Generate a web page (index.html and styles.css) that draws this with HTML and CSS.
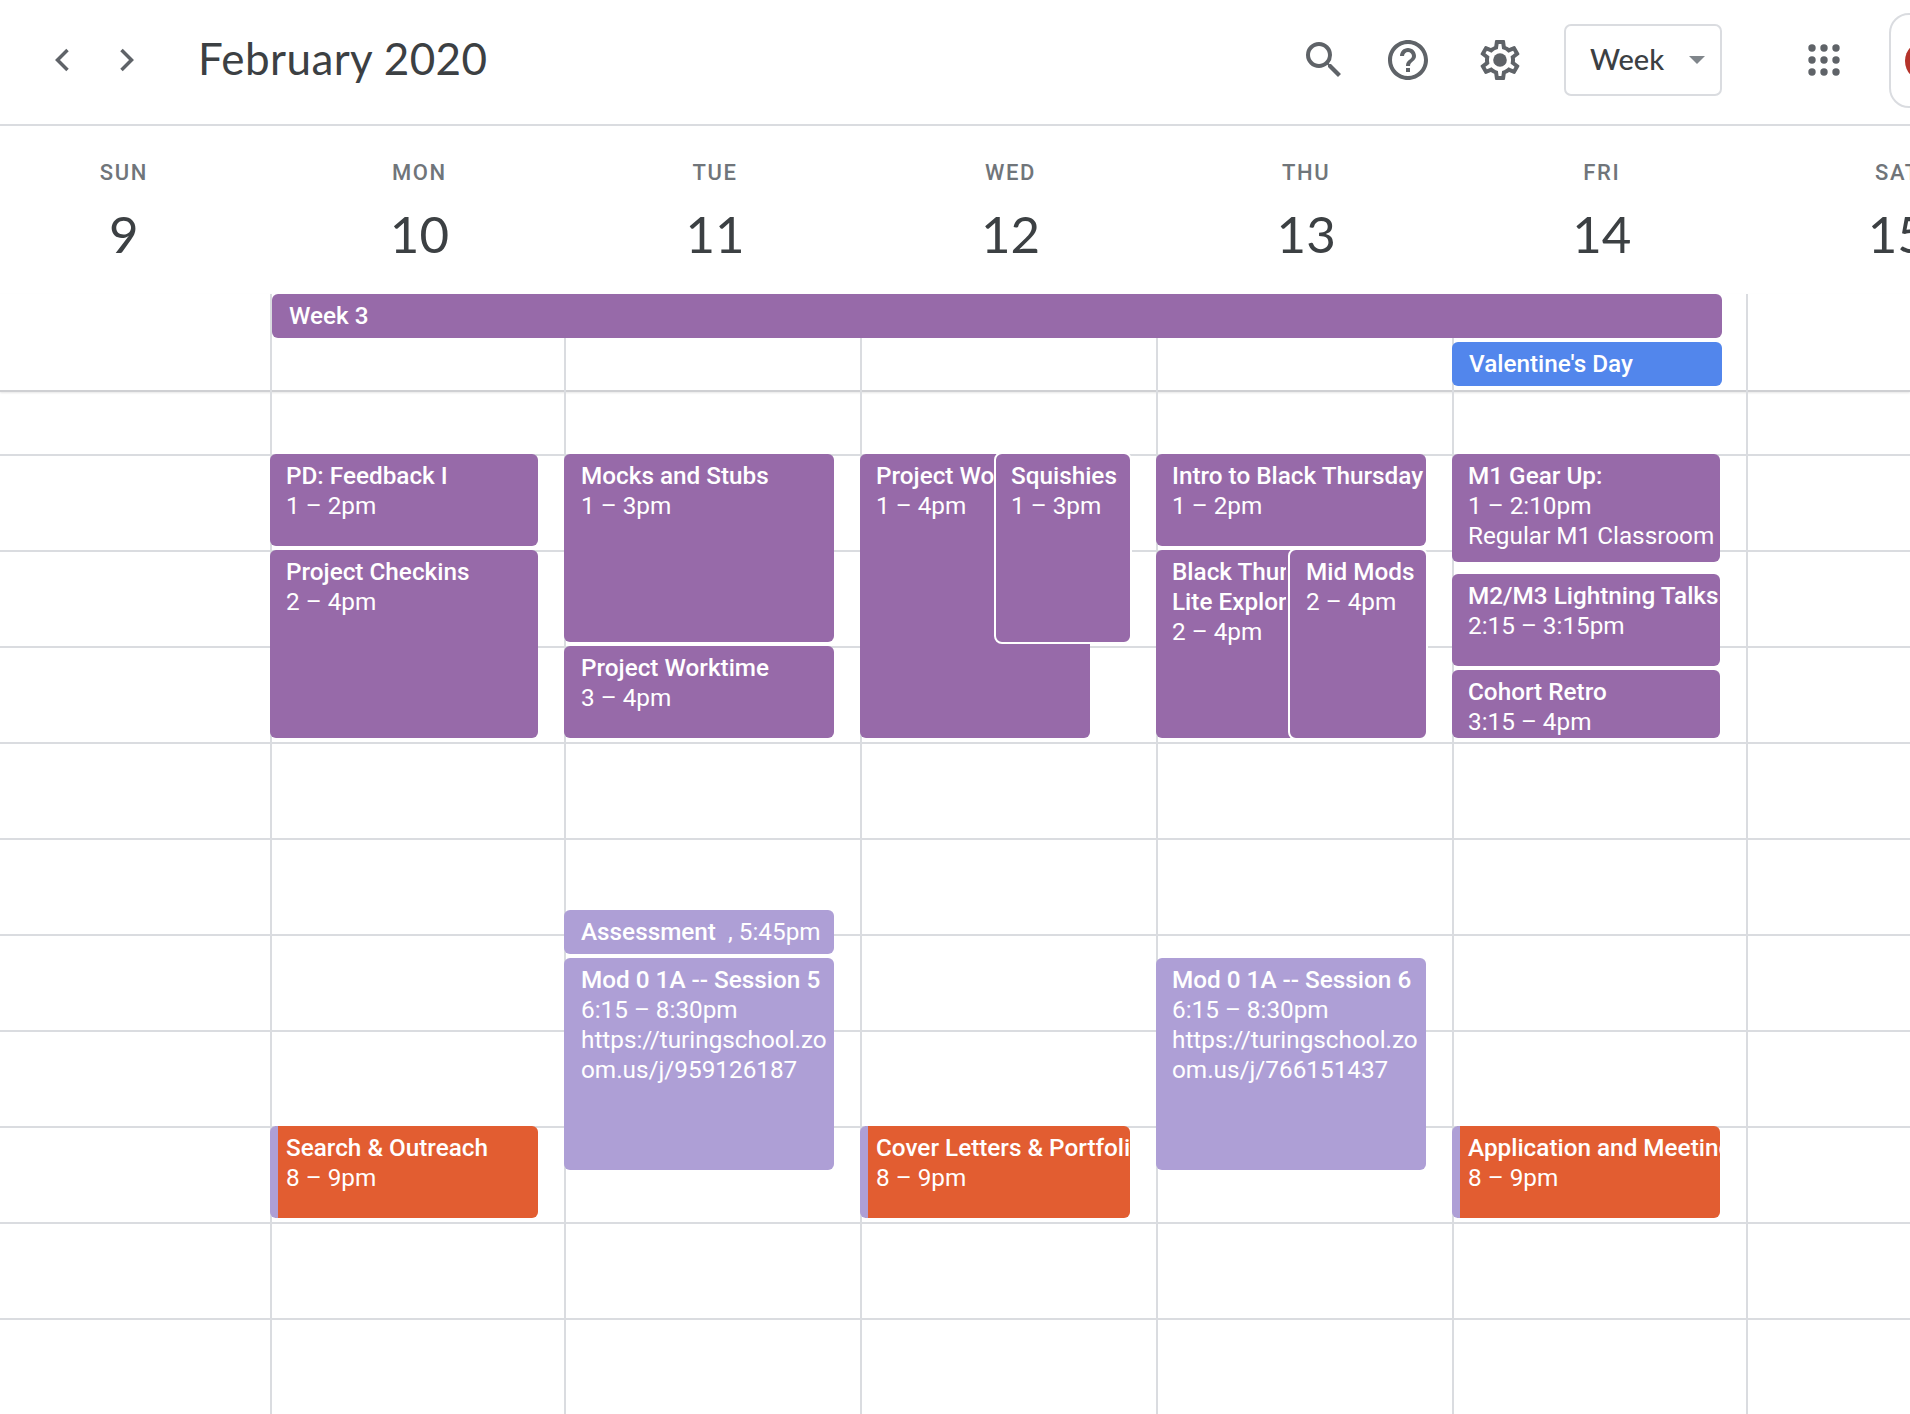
FILE: index.html
```html
<!DOCTYPE html>
<html lang="en">
<head>
<meta charset="utf-8">
<title>February 2020</title>
<link rel="stylesheet" href="styles.css">
</head>
<body>
<header class="topbar">
  <svg class="nav prev" viewBox="0 0 24 24"><polyline points="19.5,2 9.5,12 19.5,22"/></svg>
  <svg class="nav next" viewBox="0 0 24 24"><polyline points="9.5,2 19.5,12 9.5,22"/></svg>
  <h1 class="month">February 2020</h1>
  <svg class="icon search" viewBox="0 0 24 24"><path d="M15.5 14h-.79l-.28-.27A6.471 6.471 0 0 0 16 9.5 6.5 6.5 0 1 0 9.5 16c1.61 0 3.09-.59 4.23-1.57l.27.28v.79l5 4.99L20.49 19l-4.99-5zm-6 0C7.01 14 5 11.99 5 9.5S7.01 5 9.5 5 14 7.01 14 9.5 11.99 14 9.5 14z"/></svg>
  <svg class="icon help" viewBox="0 0 24 24"><path d="M11 18h2v-2h-2v2zm1-16C6.48 2 2 6.48 2 12s4.48 10 10 10 10-4.48 10-10S17.52 2 12 2zm0 18c-4.41 0-8-3.59-8-8s3.59-8 8-8 8 3.59 8 8-3.59 8-8 8zm0-14c-2.21 0-4 1.79-4 4h2c0-1.1.9-2 2-2s2 .9 2 2c0 2-3 1.75-3 5h2c0-2.25 3-2.5 3-5 0-2.21-1.79-4-4-4z"/></svg>
  <svg class="icon gear" viewBox="0 0 24 24"><path d="M19.43 12.98c.04-.32.07-.64.07-.98 0-.34-.03-.66-.07-.98l2.11-1.65c.19-.15.24-.42.12-.64l-2-3.46c-.09-.16-.26-.25-.44-.25-.06 0-.12.01-.17.03l-2.49 1c-.52-.4-1.08-.73-1.69-.98l-.38-2.65C14.46 2.18 14.25 2 14 2h-4c-.25 0-.46.18-.49.42l-.38 2.65c-.61.25-1.17.59-1.69.98l-2.49-1c-.06-.02-.12-.03-.18-.03-.17 0-.34.09-.43.25l-2 3.46c-.13.22-.07.49.12.64l2.11 1.65c-.04.32-.07.65-.07.98 0 .33.03.66.07.98l-2.11 1.65c-.19.15-.24.42-.12.64l2 3.46c.09.16.26.25.44.25.06 0 .12-.01.17-.03l2.49-1c.52.4 1.08.73 1.69.98l.38 2.65c.03.24.24.42.49.42h4c.25 0 .46-.18.49-.42l.38-2.65c.61-.25 1.17-.59 1.69-.98l2.49 1c.06.02.12.03.18.03.17 0 .34-.09.43-.25l2-3.46c.12-.22.07-.49-.12-.64l-2.11-1.65zm-1.98-1.71c.04.31.05.52.05.73 0 .21-.02.43-.05.73l-.14 1.13.89.7 1.08.84-.7 1.21-1.27-.51-1.04-.42-.9.68c-.43.32-.84.56-1.25.73l-1.06.43-.16 1.13-.2 1.35h-1.4l-.19-1.35-.16-1.13-1.06-.43c-.43-.18-.83-.41-1.23-.71l-.91-.7-1.06.43-1.27.51-.7-1.21 1.08-.84.89-.7-.14-1.13c-.03-.31-.05-.54-.05-.74s.02-.43.05-.73l.14-1.13-.89-.7-1.08-.84.7-1.21 1.27.51 1.04.42.9-.68c.43-.32.84-.56 1.25-.73l1.06-.43.16-1.13.2-1.35h1.39l.19 1.35.16 1.13 1.06.43c.43.18.83.41 1.23.71l.91.7 1.06-.43 1.27-.51.7 1.21-1.07.85-.89.7.14 1.13z"/><circle cx="12" cy="12" r="3.4"/></svg>
  <div class="view-select"><span class="view-label">Week</span><span class="caret"></span></div>
  <svg class="icon apps" viewBox="0 0 48 48"><circle cx="12" cy="12" r="3.7"/><circle cx="24" cy="12" r="3.7"/><circle cx="36" cy="12" r="3.7"/><circle cx="12" cy="24" r="3.7"/><circle cx="24" cy="24" r="3.7"/><circle cx="36" cy="24" r="3.7"/><circle cx="12" cy="36" r="3.7"/><circle cx="24" cy="36" r="3.7"/><circle cx="36" cy="36" r="3.7"/></svg>
  <div class="account"><span class="avatar"></span></div>
</header>

<section class="day-heads">
  <div class="day-head"><div class="dow">SUN</div><div class="dom">9</div></div>
  <div class="day-head"><div class="dow">MON</div><div class="dom">10</div></div>
  <div class="day-head"><div class="dow">TUE</div><div class="dom">11</div></div>
  <div class="day-head"><div class="dow">WED</div><div class="dom">12</div></div>
  <div class="day-head"><div class="dow">THU</div><div class="dom">13</div></div>
  <div class="day-head"><div class="dow">FRI</div><div class="dom">14</div></div>
  <div class="day-head"><div class="dow">SAT</div><div class="dom">15</div></div>
</section>

<section class="all-day">
  <div class="banner-wrap"><div class="banner purple">Week 3</div></div>
  <div class="sat-cell"></div>
  <div class="cell mon"></div>
  <div class="cell tue"></div>
  <div class="cell wed"></div>
  <div class="cell thu"></div>
  <div class="cell fri"><div class="banner blue">Valentine's Day</div></div>
</section>

<main class="grid">
  <div class="col"></div>

  <div class="col">
    <div class="ev purple w268" style="top:62px;height:92px"><b>PD: Feedback I</b><span>1 – 2pm</span></div>
    <div class="ev purple w268" style="top:158px;height:188px"><b>Project Checkins</b><span>2 – 4pm</span></div>
    <div class="ev orange w268" style="top:734px;height:92px"><b>Search &amp; Outreach</b><span>8 – 9pm</span></div>
  </div>

  <div class="col">
    <div class="ev purple w270" style="top:62px;height:188px"><b>Mocks and Stubs</b><span>1 – 3pm</span></div>
    <div class="ev purple w270" style="top:254px;height:92px"><b>Project Worktime</b><span>3 – 4pm</span></div>
    <div class="ev lilac w270" style="top:518px;height:44px"><p class="one"><b>Assessment</b>&nbsp; , 5:45pm</p></div>
    <div class="ev lilac w270" style="top:566px;height:212px"><b>Mod 0 1A -- Session 5</b><span>6:15 – 8:30pm</span><span>https://turingschool.zo</span><span>om.us/j/959126187</span></div>
  </div>

  <div class="col">
    <div class="ev purple wide-under" style="top:62px;height:284px"><b class="clip-wed">Project Worktime</b><span>1 – 4pm</span></div>
    <div class="ev purple over squishies" style="top:60px;height:192px"><b>Squishies</b><span>1 – 3pm</span></div>
    <div class="ev orange w270" style="top:734px;height:92px"><b>Cover Letters &amp; Portfolio</b><span>8 – 9pm</span></div>
  </div>

  <div class="col">
    <div class="ev purple w270" style="top:62px;height:92px"><b>Intro to Black Thursday</b><span>1 – 2pm</span></div>
    <div class="ev purple w270" style="top:158px;height:188px"><b class="clip-thu">Black Thursday</b><b class="clip-thu">Lite Exploration</b><span>2 – 4pm</span></div>
    <div class="ev purple over midmods" style="top:156px;height:192px"><b>Mid Mods</b><span>2 – 4pm</span></div>
    <div class="ev lilac w270" style="top:566px;height:212px"><b>Mod 0 1A -- Session 6</b><span>6:15 – 8:30pm</span><span>https://turingschool.zo</span><span>om.us/j/766151437</span></div>
  </div>

  <div class="col">
    <div class="ev purple w268" style="top:62px;height:108px"><b>M1 Gear Up:</b><span>1 – 2:10pm</span><span>Regular M1 Classroom</span></div>
    <div class="ev purple w268" style="top:182px;height:92px"><b>M2/M3 Lightning Talks</b><span>2:15 – 3:15pm</span></div>
    <div class="ev purple w268" style="top:278px;height:68px"><b>Cohort Retro</b><span>3:15 – 4pm</span></div>
    <div class="ev orange w268" style="top:734px;height:92px"><b>Application and Meeting</b><span>8 – 9pm</span></div>
  </div>

  <div class="col"></div>
</main>
</body>
</html>
```

FILE: styles.css
```css
* { box-sizing: border-box; }

html, body {
  margin: 0;
  width: 1910px;
  height: 1414px;
  overflow: hidden;
  background: #fff;
  font-family: Roboto, "Liberation Sans", sans-serif;
  color: #3c4043;
}

/* Top bar */
.topbar {
  display: flex;
  align-items: center;
  height: 126px;
  padding: 0 0 4px 48px;
  border-bottom: 2px solid #dadce0;
}

.nav { width: 24px; height: 24px; flex: none; }
.nav polyline { fill: none; stroke: #5f6368; stroke-width: 3.5; }
.next { margin-left: 40px; }

.month {
  flex: 1;
  margin: 0 0 4px 62px;
  font-family: Lato, sans-serif;
  font-size: 44px;
  font-weight: 400;
  letter-spacing: .4px;
  line-height: 56px;
  white-space: nowrap;
}

.icon { width: 48px; height: 48px; flex: none; fill: #5f6368; }
.help { margin-left: 36px; }
.gear { margin-left: 44px; }

.view-select {
  display: flex;
  align-items: center;
  flex: none;
  width: 158px;
  height: 72px;
  margin-left: 40px;
  padding-left: 24px;
  border: 2px solid #dadce0;
  border-radius: 7px;
}
.view-label {
  width: 99px;
  margin-bottom: 3px;
  font-family: Lato, sans-serif;
  font-size: 29px;
  font-weight: 500;
}
.caret {
  width: 0;
  height: 0;
  border-left: 8px solid transparent;
  border-right: 8px solid transparent;
  border-top: 8px solid #80868b;
}

.apps { margin-left: 78px; }

.account {
  flex: none;
  width: 60px;
  height: 95px;
  margin-left: 41px;
  margin-right: -39px;
  padding: 26px 0 0 14px;
  border: 2px solid #dadce0;
  border-radius: 20px 0 0 20px;
}
.avatar {
  display: block;
  width: 40px;
  height: 40px;
  border-radius: 50%;
  background: #b5332a;
}

/* Day headings */
.day-heads {
  display: grid;
  grid-template-columns: repeat(7, 295.6px);
  height: 168px;
  margin-left: -24px;
  padding-top: 33px;
}
.day-head { text-align: center; }
.dow {
  font-size: 22px;
  font-weight: 500;
  line-height: 28px;
  letter-spacing: 1.6px;
  color: #70757a;
}
.dom {
  margin-top: 17px;
  font-family: Lato, sans-serif;
  font-size: 51px;
  line-height: 60px;
}

/* All-day strip */
.all-day {
  display: grid;
  grid-template-columns: 270px 294px 296px 296px 296px 294px 1fr;
  grid-template-rows: 44px 54px;
  height: 98px;
  border-bottom: 2px solid #cfd0d3;
  box-shadow: 0 1px 2px rgba(0, 0, 0, .1);
  position: relative;
}
.banner-wrap {
  grid-column: 2 / 7;
  grid-row: 1;
  border-left: 2px solid #dadce0;
  padding-right: 24px;
}
.sat-cell { grid-column: 7; grid-row: 1 / 3; border-left: 2px solid #dadce0; }
.cell { grid-row: 2; border-left: 2px solid #dadce0; }
.mon { grid-column: 2; }
.tue { grid-column: 3; }
.wed { grid-column: 4; }
.thu { grid-column: 5; }
.fri { grid-column: 6; padding-top: 4px; }

.banner {
  height: 44px;
  padding-left: 17px;
  border-radius: 6px;
  color: #fff;
  font-size: 24.3px;
  font-weight: 500;
  line-height: 44px;
}
.blue { background: #5286ec; margin-left: -2px; margin-right: 24px; }

/* Time grid */
.grid {
  display: grid;
  grid-template-columns: 270px 294px 296px 296px 296px 294px 1fr;
  height: 1022px;
  background-image: linear-gradient(to bottom, #dadce0 2px, transparent 2px);
  background-size: 100% 96px;
  background-position: 0 62px;
}
.col {
  position: relative;
  border-left: 2px solid #dadce0;
}
.col:first-child { border-left: 0; }

.ev {
  position: absolute;
  left: -2px;
  padding: 7px 0 0 16px;
  overflow: hidden;
  border-radius: 6px;
  color: #fff;
  font-size: 24.3px;
  line-height: 30px;
  white-space: nowrap;
}
.ev b, .ev span { display: block; }
.ev b { font-weight: 500; }
.ev .one { margin: 0; }
.ev .one b { display: inline; }
.col:nth-child(3) .ev { padding-left: 17px; }

.clip-wed { width: 118px; overflow: hidden; }
.clip-thu { width: 114px; overflow: hidden; }

.w268 { width: 268px; }
.w270 { width: 270px; }
.wide-under { width: 230px; }

.purple { background: #976aa9; }
.lilac { background: #ae9fd6; }
.orange {
  background: #e25d31;
  border-left: 8px solid #ae9fd6;
  padding-left: 8px;
}

.over {
  border: 2px solid #fff;
  border-radius: 8px;
  padding: 7px 0 0 15px;
}
.squishies { left: 132px; width: 138px; }
.midmods { left: 130px; width: 140px; padding-left: 16px; }
```
